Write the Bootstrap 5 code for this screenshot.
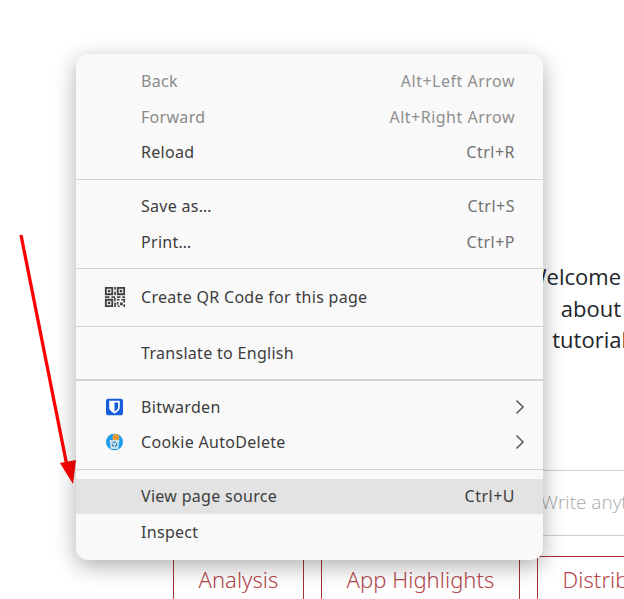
<!DOCTYPE html>
<html lang="en">
<head>
<meta charset="utf-8">
<title>Context menu</title>
<link rel="stylesheet" href="https://cdn.jsdelivr.net/npm/bootstrap@5.3.0/dist/css/bootstrap.min.css">
<style>
html,body{height:599px;overflow:hidden;background:#fff;}
body{font-family:"Noto Sans",sans-serif;position:relative;width:624px;}
.page-under{padding-top:261px;}
.lede-lines{font-family:"Open Sans",sans-serif;font-size:22px;line-height:31.5px;color:#212529;text-align:right;width:621px;white-space:nowrap;}
.lede-over{margin-right:-6px;}
.composer{margin:114px 0 0 173px;height:66px;border-top:1px solid #d0d0d0;border-bottom:1px solid #d0d0d0;font-family:"Open Sans",sans-serif;font-weight:300;font-size:19px;color:#a9a9a9;padding:17px 0 0 368px;white-space:nowrap;}
.tab-strip{margin:20px 0 0 173px;gap:17px;white-space:nowrap;}
.tab-cell{border:1px solid #a83232;border-bottom:0;height:60px;padding:6px 24.7px 0 24.5px;font-size:22px;font-weight:300;letter-spacing:.05px;color:#b5474b;flex:none;}
.ctx-menu.dropdown-menu{position:absolute;left:76px;top:54px;width:467px;height:506px;margin:0;padding:9px 0 0;border:0;border-radius:12px;background:#f9f9f9;box-shadow:0 6px 22px rgba(0,0,0,.32);font-size:16px;letter-spacing:.3px;display:block;}
.ctx-menu .dropdown-item{height:35.5px;padding:0 28px 0 65px;color:#3d3d3d;display:flex;align-items:center;justify-content:space-between;position:relative;background:transparent;}
.ctx-menu .dropdown-item.disabled{color:#8a8a8a;background:transparent;}
.ctx-menu .dropdown-item.row-36{height:36px;}
.ctx-menu .dropdown-item.row-35{height:35px;}
.ctx-menu .dropdown-item.tall-row{height:39.5px;}
.ctx-menu .dropdown-item.active-row{background:#e3e3e3;color:#3d3d3d;height:35px;padding-bottom:1px;}
.key-hint{color:#727272;letter-spacing:.5px;}
.disabled .key-hint{color:#8f8f8f;}
.active-row .key-hint{color:#3d3d3d;}
.ctx-menu .dropdown-divider{margin:8.5px 0;border-top:1px solid #d4d4d4;opacity:1;}
.ctx-menu .dropdown-divider.line-a{margin-top:9px;}
.ctx-menu .dropdown-divider.heavy-line{border-top-width:2px;margin-top:8px;}
.ctx-menu .dropdown-divider.last-line{margin:9px 0;}
.row-icon{position:absolute;left:28px;top:50%;transform:translateY(-50%);display:block;}
.ext-icon{left:30px;margin-top:-.5px;}
.sub-arrow{margin-right:-10px;display:block;}
.red-arrow{position:absolute;left:0;top:0;pointer-events:none;}
</style>
</head>
<body>
<div class="page-under">
  <div class="lede-lines">
    <div>Welcome</div>
    <div>about</div>
    <div class="lede-over">tutorial</div>
  </div>
  <div class="composer">Write anything</div>
  <div class="d-flex tab-strip">
    <div class="tab-cell">Analysis</div>
    <div class="tab-cell">App Highlights</div>
    <div class="tab-cell">Distribution</div>
  </div>
</div>

<div class="dropdown-menu show ctx-menu">
  <a class="dropdown-item disabled row-36"><span>Back</span><span class="key-hint">Alt+Left Arrow</span></a>
  <a class="dropdown-item disabled"><span>Forward</span><span class="key-hint">Alt+Right Arrow</span></a>
  <a class="dropdown-item"><span>Reload</span><span class="key-hint">Ctrl+R</span></a>
  <hr class="dropdown-divider line-a">
  <a class="dropdown-item"><span>Save as…</span><span class="key-hint">Ctrl+S</span></a>
  <a class="dropdown-item"><span>Print…</span><span class="key-hint">Ctrl+P</span></a>
  <hr class="dropdown-divider">
  <a class="dropdown-item tall-row">
    <svg class="row-icon" width="22" height="22" viewBox="0 0 24 24" fill="#3f3f3f" aria-hidden="true">
      <path fill-rule="evenodd" d="M1 1h9v9H1zM3 3v5h5V3zM14 1h9v9h-9zM16 3v5h5V3zM1 14h9v9H1zM3 16v5h5v-5z"/>
      <rect x="4.2" y="4.2" width="2.6" height="2.6"/><rect x="17.2" y="4.2" width="2.6" height="2.6"/><rect x="4.2" y="17.2" width="2.6" height="2.6"/>
      <rect x="11.2" y="1" width="1.8" height="3"/><rect x="11.2" y="6" width="1.8" height="4"/>
      <rect x="1" y="11.2" width="5" height="1.8"/><rect x="8" y="11.2" width="4" height="1.8"/><rect x="11" y="13" width="1.8" height="3.5"/>
      <rect x="14" y="11.2" width="4" height="1.8"/><rect x="20" y="11.2" width="3" height="1.8"/>
      <rect x="11.2" y="18" width="1.8" height="5"/><rect x="14" y="14" width="3" height="1.8"/><rect x="14" y="17.5" width="1.8" height="3"/>
      <rect x="19" y="14" width="4" height="1.8"/><rect x="21.2" y="15" width="1.8" height="3"/><rect x="17.5" y="18" width="3" height="3"/>
      <rect x="15" y="21.2" width="2" height="1.8"/><rect x="21.2" y="20" width="1.8" height="3"/>
    </svg>
    <span>Create QR Code for this page</span>
  </a>
  <hr class="dropdown-divider line-a">
  <a class="dropdown-item"><span>Translate to English</span></a>
  <hr class="dropdown-divider heavy-line">
  <a class="dropdown-item row-35">
    <svg class="row-icon ext-icon" width="17" height="17" viewBox="0 0 18 18" aria-hidden="true">
      <rect width="18" height="18" rx="3" fill="#175ddc"/>
      <path d="M3.4 2.4h11.2v7.2c0 3-3.2 5-5.6 6.2-2.4-1.2-5.6-3.2-5.6-6.2z" fill="#fff"/>
      <path d="M9 4.2h3.8v5.3c0 1.9-2 3.3-3.8 4.2z" fill="#175ddc"/>
    </svg>
    <span>Bitwarden</span>
    <svg class="sub-arrow" width="10" height="16" viewBox="0 0 10 16" fill="none" stroke="#5f5f5f" stroke-width="1.6" aria-hidden="true"><path d="M1.5 1.5 8 8l-6.5 6.5"/></svg>
  </a>
  <a class="dropdown-item">
    <svg class="row-icon ext-icon" width="17" height="17" viewBox="0 0 18 18" aria-hidden="true">
      <circle cx="9" cy="9" r="9" fill="#1b9ce8"/>
      <circle cx="10.4" cy="4.2" r="3.6" fill="#f0a23c"/>
      <circle cx="9.4" cy="3.4" r=".7" fill="#9a5a1c"/><circle cx="11.8" cy="4.8" r=".7" fill="#9a5a1c"/>
      <path d="M3.8 6.8h10.4l-1.2 9.6H5z" fill="#c9dfee"/>
      <circle cx="9" cy="11.4" r="2.3" fill="none" stroke="#2f7fb5" stroke-width="1.3" stroke-dasharray="3 1"/>
    </svg>
    <span>Cookie AutoDelete</span>
    <svg class="sub-arrow" width="10" height="16" viewBox="0 0 10 16" fill="none" stroke="#5f5f5f" stroke-width="1.6" aria-hidden="true"><path d="M1.5 1.5 8 8l-6.5 6.5"/></svg>
  </a>
  <hr class="dropdown-divider last-line">
  <a class="dropdown-item active-row"><span>View page source</span><span class="key-hint">Ctrl+U</span></a>
  <a class="dropdown-item row-36"><span>Inspect</span></a>
</div>

<svg class="red-arrow" width="100" height="500" viewBox="0 0 100 500" aria-hidden="true">
  <line x1="21" y1="235" x2="67" y2="466" stroke="#ff0000" stroke-width="3.3"/>
  <polygon points="60,463 76,460 73,484" fill="#ff0000"/>
</svg>
</body>
</html>
